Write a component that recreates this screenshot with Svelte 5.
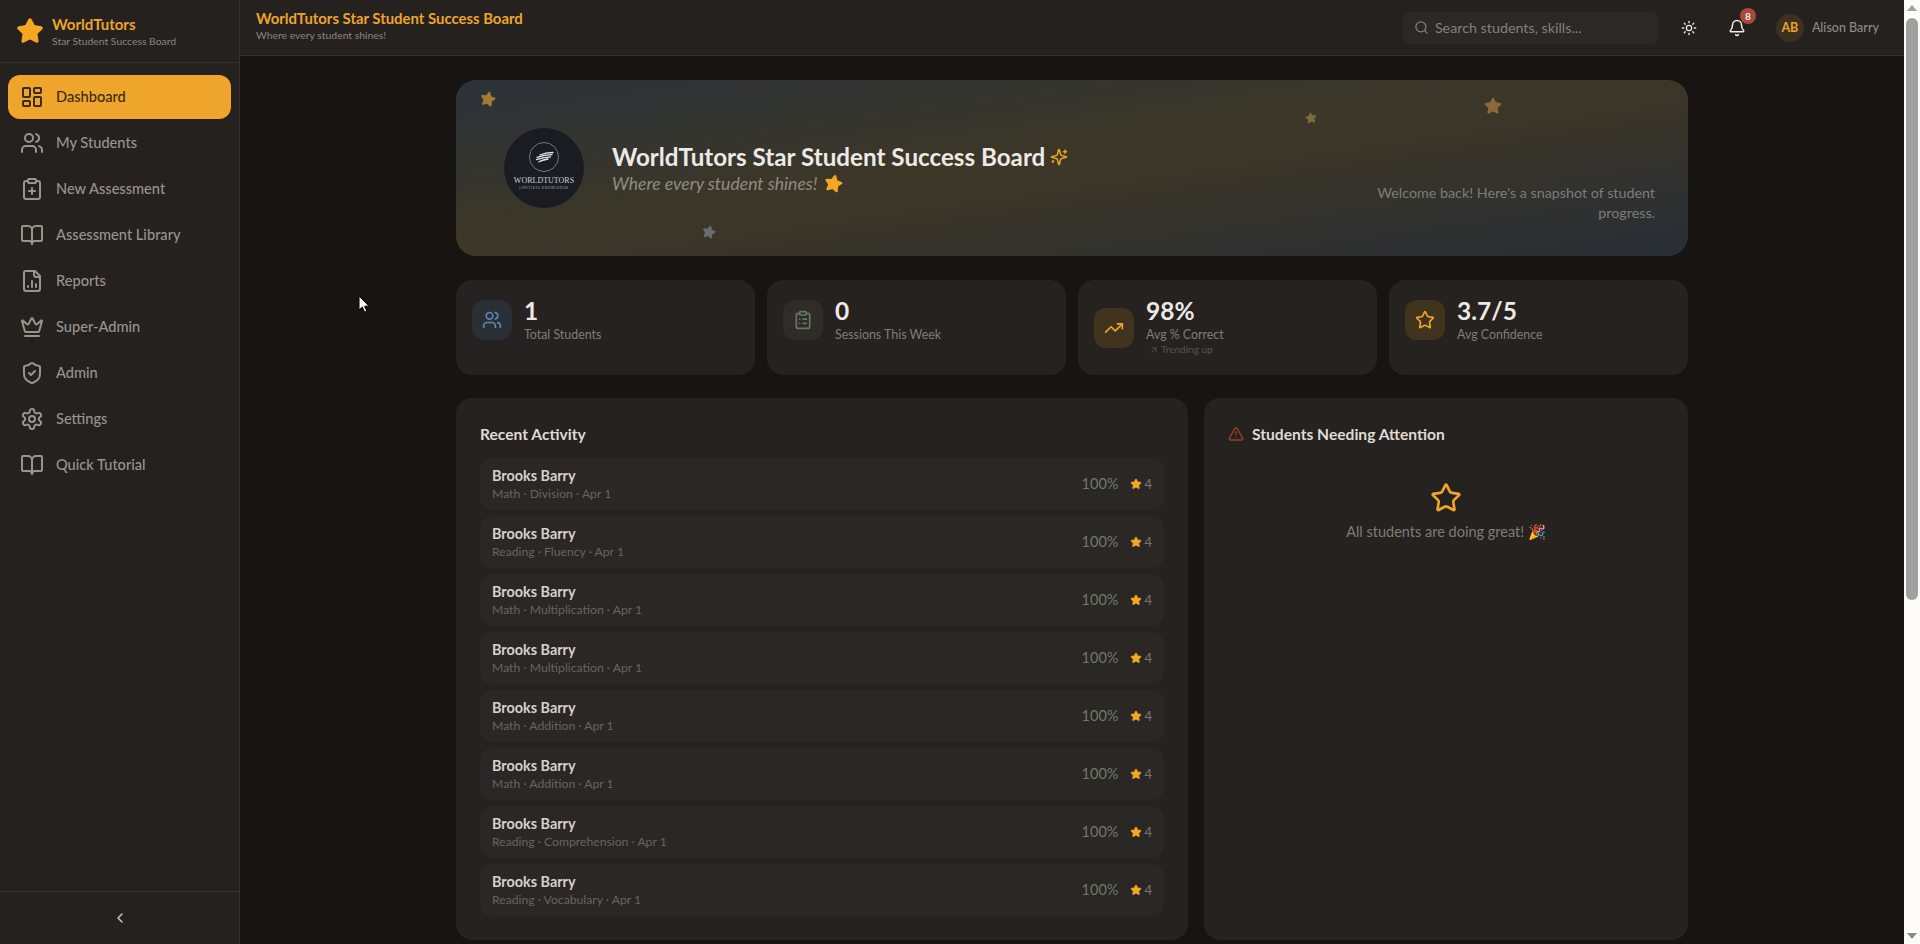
<script>
  const star = 'M11.525 2.295a.53.53 0 0 1 .95 0l2.31 4.679a2.123 2.123 0 0 0 1.595 1.16l5.166.756a.53.53 0 0 1 .294.904l-3.736 3.638a2.123 2.123 0 0 0-.611 1.878l.882 5.14a.53.53 0 0 1-.771.56l-4.618-2.428a2.122 2.122 0 0 0-1.973 0L6.396 21.01a.53.53 0 0 1-.77-.56l.881-5.139a2.122 2.122 0 0 0-.611-1.879L2.16 9.795a.53.53 0 0 1 .294-.906l5.165-.755a2.122 2.122 0 0 0 1.597-1.16z';
  const users = ['M16 21v-2a4 4 0 0 0-4-4H6a4 4 0 0 0-4 4v2', 'M16 3.13a4 4 0 0 1 0 7.75', 'M22 21v-2a4 4 0 0 0-3-3.87', 'M13 7a4 4 0 1 1-8 0a4 4 0 1 1 8 0'];
  const book = ['M12 7v14', 'M3 18a1 1 0 0 1-1-1V4a1 1 0 0 1 1-1h5a4 4 0 0 1 4 4 4 4 0 0 1 4-4h5a1 1 0 0 1 1 1v13a1 1 0 0 1-1 1h-6a3 3 0 0 0-3 3 3 3 0 0 0-3-3z'];
  const clip = 'M16 4h2a2 2 0 0 1 2 2v14a2 2 0 0 1-2 2H6a2 2 0 0 1-2-2V6a2 2 0 0 1 2-2h2';
  const clipTop = 'M9 2h6a1 1 0 0 1 1 1v2a1 1 0 0 1-1 1H9a1 1 0 0 1-1-1V3a1 1 0 0 1 1-1z';

  const nav = [
    { label: 'Dashboard', active: true, paths: ['M4 3h5a1 1 0 0 1 1 1v7a1 1 0 0 1-1 1H4a1 1 0 0 1-1-1V4a1 1 0 0 1 1-1z', 'M15 3h5a1 1 0 0 1 1 1v3a1 1 0 0 1-1 1h-5a1 1 0 0 1-1-1V4a1 1 0 0 1 1-1z', 'M15 12h5a1 1 0 0 1 1 1v7a1 1 0 0 1-1 1h-5a1 1 0 0 1-1-1v-7a1 1 0 0 1 1-1z', 'M4 16h5a1 1 0 0 1 1 1v3a1 1 0 0 1-1 1H4a1 1 0 0 1-1-1v-3a1 1 0 0 1 1-1z'] },
    { label: 'My Students', paths: users },
    { label: 'New Assessment', paths: [clipTop, clip, 'M9 14h6', 'M12 17v-6'] },
    { label: 'Assessment Library', paths: book },
    { label: 'Reports', paths: ['M15 2H6a2 2 0 0 0-2 2v16a2 2 0 0 0 2 2h12a2 2 0 0 0 2-2V7Z', 'M14 2v4a2 2 0 0 0 2 2h4', 'M8 18v-1', 'M12 18v-6', 'M16 18v-3'] },
    { label: 'Super-Admin', paths: ['M11.562 3.266a.5.5 0 0 1 .876 0L15.39 8.87a1 1 0 0 0 1.516.294L21.183 5.5a.5.5 0 0 1 .798.519l-2.834 10.246a1 1 0 0 1-.956.734H5.81a1 1 0 0 1-.957-.734L2.02 6.02a.5.5 0 0 1 .798-.519l4.276 3.664a1 1 0 0 0 1.516-.294z', 'M5 21h14'] },
    { label: 'Admin', paths: ['M20 13c0 5-3.5 7.5-7.66 8.95a1 1 0 0 1-.67-.01C7.5 20.5 4 18 4 13V6a1 1 0 0 1 1-1c2 0 4.5-1.2 6.24-2.72a1.17 1.17 0 0 1 1.52 0C14.51 3.81 17 5 19 5a1 1 0 0 1 1 1z', 'm9 12 2 2 4-4'] },
    { label: 'Settings', paths: ['M12.22 2h-.44a2 2 0 0 0-2 2v.18a2 2 0 0 1-1 1.73l-.43.25a2 2 0 0 1-2 0l-.15-.08a2 2 0 0 0-2.73.73l-.22.38a2 2 0 0 0 .73 2.73l.15.1a2 2 0 0 1 1 1.72v.51a2 2 0 0 1-1 1.74l-.15.09a2 2 0 0 0-.73 2.73l.22.38a2 2 0 0 0 2.73.73l.15-.08a2 2 0 0 1 2 0l.43.25a2 2 0 0 1 1 1.73V20a2 2 0 0 0 2 2h.44a2 2 0 0 0 2-2v-.18a2 2 0 0 1 1-1.73l.43-.25a2 2 0 0 1 2 0l.15.08a2 2 0 0 0 2.73-.73l.22-.39a2 2 0 0 0-.73-2.73l-.15-.08a2 2 0 0 1-1-1.74v-.5a2 2 0 0 1 1-1.74l.15-.09a2 2 0 0 0 .73-2.73l-.22-.38a2 2 0 0 0-2.73-.73l-.15.08a2 2 0 0 1-2 0l-.43-.25a2 2 0 0 1-1-1.73V4a2 2 0 0 0-2-2z', 'M15 12a3 3 0 1 1-6 0a3 3 0 1 1 6 0'] },
    { label: 'Quick Tutorial', paths: book }
  ];

  const stats = [
    { value: '1', label: 'Total Students', tint: 'blue', paths: users },
    { value: '0', label: 'Sessions This Week', tint: 'green', paths: [clipTop, clip, 'M12 11h4', 'M12 16h4', 'M8 11h.01', 'M8 16h.01'] },
    { value: '98%', label: 'Avg % Correct', tint: 'amber', trend: 'Trending up', paths: ['M22 7l-8.5 8.5-5-5L2 17', 'M16 7h6v6'] },
    { value: '3.7/5', label: 'Avg Confidence', tint: 'amber', paths: [star] }
  ];

  const activity = [
    'Math · Division · Apr 1',
    'Reading · Fluency · Apr 1',
    'Math · Multiplication · Apr 1',
    'Math · Multiplication · Apr 1',
    'Math · Addition · Apr 1',
    'Math · Addition · Apr 1',
    'Reading · Comprehension · Apr 1',
    'Reading · Vocabulary · Apr 1'
  ];

  const floaters = [
    { x: 488, y: 99, s: 16, c: '#a07c34', r: 12 },
    { x: 1311, y: 118, s: 12, c: '#7d6a3c', r: -8 },
    { x: 1493, y: 106, s: 18, c: '#8a6a3a', r: 0 },
    { x: 709, y: 232, s: 14, c: '#6a6c70', r: 14 }
  ];
</script>

{#snippet icon(paths, size, cls = '')}
  <svg class={cls} width={size} height={size} viewBox="0 0 24 24" fill="none" stroke="currentColor" stroke-width="2" stroke-linecap="round" stroke-linejoin="round">
    {#each paths as d}<path {d} />{/each}
  </svg>
{/snippet}

{#snippet solidStar(size)}
  <svg width={size} height={size} viewBox="0 0 24 24" fill="#f5a623" stroke="#f5a623" stroke-width="2" stroke-linejoin="round"><path d={star} /></svg>
{/snippet}

<div class="shell">
  <aside class="sidebar">
    <div class="brand">
      {@render solidStar(28)}
      <div>
        <div class="brand-name">WorldTutors</div>
        <div class="brand-sub">Star Student Success Board</div>
      </div>
    </div>
    <nav class="nav">
      {#each nav as item}
        <div class="nav-item" class:active={item.active}>
          {@render icon(item.paths, 24)}
          <span>{item.label}</span>
        </div>
      {/each}
    </nav>
    <div class="collapse">
      {@render icon(['m15 18-6-6 6-6'], 16)}
    </div>
  </aside>

  <div class="main">
    <header class="topbar">
      <div class="top-title">
        <div class="top-name">WorldTutors Star Student Success Board</div>
        <div class="top-sub">Where every student shines!</div>
      </div>
      <div class="search">
        {@render icon(['m21 21-4.34-4.34', 'M19 11a8 8 0 1 1-16 0a8 8 0 1 1 16 0'], 15)}
        <span>Search students, skills...</span>
      </div>
      <div class="sun">
        {@render icon(['M16 12a4 4 0 1 1-8 0a4 4 0 1 1 8 0', 'M12 2v2', 'M12 20v2', 'm4.93 4.93 1.41 1.41', 'm17.66 17.66 1.41 1.41', 'M2 12h2', 'M20 12h2', 'm6.34 17.66-1.41 1.41', 'm19.07 4.93-1.41 1.41'], 16)}
      </div>
      <div class="bell">
        {@render icon(['M10.268 21a2 2 0 0 0 3.464 0', 'M3.262 15.326A1 1 0 0 0 4 17h16a1 1 0 0 0 .74-1.673C19.41 13.956 18 12.499 18 8A6 6 0 0 0 6 8c0 4.499-1.411 5.956-2.738 7.326'], 18)}
        <span class="badge">8</span>
      </div>
      <div class="user">
        <div class="avatar">AB</div>
        <span>Alison Barry</span>
      </div>
    </header>

    <main class="content">
      <section class="hero">
        <div class="logo">
          <div class="logo-ring">
            <svg width="20" height="13" viewBox="0 0 20 13" fill="none" stroke="#e3e8ee" stroke-width="1.3" stroke-linecap="round">
              <path d="M19 1.5C14 1.5 9 2.6 6 4" />
              <path d="M18 3.6C13 3.8 7 5 3 6.4" />
              <path d="M16.5 5.8C12 6.2 6.5 7.2 2.5 8.6" />
              <path d="M14 8C10.500 8.600 7 9.600 5 10.800" />
            </svg>
          </div>
          <div class="logo-word">WORLDTUTORS</div>
          <div class="logo-tag">LIMITLESS KNOWLEDGE</div>
        </div>
        <div class="hero-text">
          <h1>WorldTutors Star Student Success Board {@render icon(['M9.937 15.5A2 2 0 0 0 8.5 14.063l-6.135-1.582a.5.5 0 0 1 0-.962L8.5 9.936A2 2 0 0 0 9.937 8.5l1.582-6.135a.5.5 0 0 1 .963 0L14.063 8.5A2 2 0 0 0 15.5 9.937l6.135 1.581a.5.5 0 0 1 0 .964L15.5 14.063a2 2 0 0 0-1.437 1.437l-1.582 6.135a.5.5 0 0 1-.963 0z', 'M20 3v4', 'M22 5h-4', 'M4 17v2', 'M5 18H3'], 18, 'sparkle')}</h1>
          <p class="tagline">Where every student shines! <span class="tag-star">{@render solidStar(19)}</span></p>
        </div>
        <p class="welcome">Welcome back! Here's a snapshot of student progress.</p>
        {#each floaters as f}
          <svg class="floater" style="left:{f.x - 456 - f.s / 2}px;top:{f.y - 80 - f.s / 2}px;transform:rotate({f.r}deg)" width={f.s} height={f.s} viewBox="0 0 24 24" fill={f.c} stroke={f.c} stroke-width="2" stroke-linejoin="round"><path d={star} /></svg>
        {/each}
      </section>

      <section class="stats">
        {#each stats as s}
          <div class="stat">
            <div class="stat-inner">
              <div class="stat-icon {s.tint}">{@render icon(s.paths, 20)}</div>
              <div>
                <div class="stat-value">{s.value}</div>
                <div class="stat-label">{s.label}</div>
                {#if s.trend}
                  <div class="stat-trend">{@render icon(['M7 7h10v10', 'M7 17 17 7'], 10)} {s.trend}</div>
                {/if}
              </div>
            </div>
          </div>
        {/each}
      </section>

      <section class="panels">
        <div class="panel">
          <h2>Recent Activity</h2>
          <div class="rows">
            {#each activity as sub}
              <div class="row">
                <div class="row-text">
                  <div class="row-name">Brooks Barry</div>
                  <div class="row-sub">{sub}</div>
                </div>
                <span class="pct">100%</span>
                <span class="conf">{@render solidStar(12)}4</span>
              </div>
            {/each}
          </div>
        </div>
        <div class="panel">
          <h2 class="attention">
            {@render icon(['m21.73 18-8-14a2 2 0 0 0-3.48 0l-8 14A2 2 0 0 0 4 21h16a2 2 0 0 0 1.73-3', 'M12 9v4', 'M12 17h.01'], 16)}
            <span>Students Needing Attention</span>
          </h2>
          <div class="empty">
            {@render icon([star], 32)}
            <p>All students are doing great! 🎉</p>
          </div>
        </div>
      </section>
    </main>
  </div>

  <div class="scrollbar">
    <span class="arrow up"></span>
    <div class="track"><div class="thumb"></div></div>
    <span class="arrow down"></span>
  </div>

  <svg class="cursor" width="12" height="19" viewBox="0 0 12 19"><path d="M1 1v14l3.4-3 2.2 5.2 2.2-1-2.2-5h4.4z" fill="#fff" stroke="#000" stroke-width="1" /></svg>
</div>

<style>
  :global(body) {
    margin: 0;
    background: #171412;
    font-family: "Lato", "Noto Sans", sans-serif;
  }

  .shell {
    display: flex;
    position: relative;
    width: 1920px;
    height: 944px;
    overflow: hidden;
    background: #171412;
  }

  .sidebar {
    display: flex;
    flex-direction: column;
    flex: 0 0 240px;
    box-sizing: border-box;
    border-right: 1px solid #36312e;
    background: #25211f;
  }

  .brand {
    display: flex;
    align-items: center;
    gap: 8px;
    box-sizing: border-box;
    height: 63px;
    padding: 0 16px;
    border-bottom: 1px solid #36312e;
  }
  .brand-name {
    color: #eda42b;
    font-size: 15px;
    font-weight: 700;
    line-height: 20px;
  }
  .brand-sub {
    color: #8a8580;
    font-size: 10.4px;
    line-height: 14px;
  }

  .nav {
    display: flex;
    flex: 1;
    flex-direction: column;
    gap: 2px;
    padding: 12px 8px;
  }
  .nav-item {
    display: flex;
    align-items: center;
    gap: 12px;
    height: 44px;
    padding: 0 12px;
    border-radius: 12px;
    color: #9a948d;
    font-size: 14.6px;
    font-weight: 500;
  }
  .nav-item span { padding-bottom: 2px; }
  .nav-item.active {
    background: #efa52c;
    color: #3a2a16;
  }

  .collapse {
    display: flex;
    align-items: center;
    justify-content: center;
    height: 52px;
    border-top: 1px solid #3a3532;
    color: #d5d0cb;
  }

  .main {
    display: flex;
    flex: 1;
    flex-direction: column;
    min-width: 0;
  }

  .topbar {
    display: flex;
    flex: 0 0 56px;
    align-items: center;
    box-sizing: border-box;
    padding: 0 25px 0 16px;
    border-bottom: 1px solid #36312e;
    background: #25211f;
  }
  .top-title {
    flex: 1;
    padding-bottom: 5px;
  }
  .top-name {
    color: #eda42b;
    font-size: 14.9px;
    font-weight: 700;
    line-height: 20px;
  }
  .top-sub {
    color: #8a8580;
    font-size: 10.4px;
    line-height: 14px;
  }

  .search {
    display: flex;
    align-items: center;
    gap: 6px;
    box-sizing: border-box;
    width: 256px;
    height: 32px;
    padding: 0 12px 0 11px;
    border-radius: 8px;
    background: #2c2825;
    color: #85807a;
    font-size: 14.3px;
  }
  .search span { padding-bottom: 1px; }

  .sun {
    display: flex;
    margin-left: 22px;
    color: #e8e4df;
  }

  .bell {
    display: flex;
    position: relative;
    margin-left: 31px;
    color: #f0ece8;
  }
  .badge {
    position: absolute;
    top: -11px;
    right: -10px;
    width: 16px;
    height: 16px;
    border-radius: 50%;
    background: #a8493d;
    color: #f0e6e0;
    font-size: 10px;
    font-weight: 700;
    line-height: 16px;
    text-align: center;
  }

  .user {
    display: flex;
    align-items: center;
    gap: 8px;
    margin-left: 30px;
    color: #8f8a84;
    font-size: 12.5px;
    font-weight: 500;
  }
  .avatar {
    width: 28px;
    height: 28px;
    border-radius: 50%;
    background: #3d3020;
    color: #eda42b;
    font-size: 12.5px;
    font-weight: 700;
    line-height: 28px;
    text-align: center;
  }

  .content {
    flex: 1;
    box-sizing: border-box;
    width: 1280px;
    margin: 0 auto;
    padding: 24px;
    overflow: hidden;
  }

  .hero {
    display: flex;
    align-items: center;
    position: relative;
    box-sizing: border-box;
    height: 176px;
    padding: 0 33px 0 48px;
    border-radius: 20px;
    background: linear-gradient(to bottom right, #2b323a 0%, #3c3727 45%, #3a3529 58%, #272e36 100%);
  }

  .logo {
    display: flex;
    flex: 0 0 80px;
    flex-direction: column;
    align-items: center;
    box-sizing: border-box;
    height: 80px;
    padding-top: 14px;
    border-radius: 50%;
    background: #1a1c22;
  }
  .logo-ring {
    display: flex;
    align-items: center;
    justify-content: center;
    box-sizing: border-box;
    width: 30px;
    height: 30px;
    border: 1px solid #5a7f9c;
    border-radius: 50%;
  }
  .logo-word {
    margin-top: 4px;
    color: #c4cfdb;
    font-family: "Liberation Serif", serif;
    font-size: 8px;
    line-height: 10px;
  }
  .logo-tag {
    color: #8fa0b2;
    font-size: 3.5px;
    line-height: 5px;
    letter-spacing: .5px;
  }

  .hero-text {
    flex: 1;
    margin-left: 28px;
  }
  h1 {
    display: flex;
    align-items: center;
    gap: 5px;
    margin: 0;
    color: #ece9e6;
    font-size: 24.2px;
    font-weight: 700;
    line-height: 32px;
  }
  h1 :global(.sparkle) { color: #eda42b; }
  .tagline {
    display: flex;
    align-items: center;
    gap: 7px;
    margin: -1px 0 0;
    color: #8f8c86;
    font-size: 17.6px;
    font-style: italic;
    line-height: 24px;
  }
  .tag-star {
    display: flex;
    transform: rotate(12deg);
  }
  .welcome {
    align-self: flex-end;
    box-sizing: border-box;
    width: 288px;
    margin: 0 0 33px;
    color: #807c76;
    font-size: 14.3px;
    line-height: 20px;
    text-align: right;
  }
  .floater { position: absolute; }

  .stats {
    display: grid;
    grid-template-columns: repeat(4, 1fr);
    gap: 12px;
    margin-top: 24px;
  }
  .stat {
    box-sizing: border-box;
    height: 95px;
    padding: 20px 16px;
    border-radius: 16px;
    background: #26221f;
  }
  .stat-inner {
    display: flex;
    align-items: center;
    gap: 12px;
  }
  .stat-icon {
    display: flex;
    flex: 0 0 40px;
    align-items: center;
    justify-content: center;
    height: 40px;
    border-radius: 12px;
  }
  .stat-icon.blue { background: #2a2f35; color: #5b87b5; }
  .stat-icon.green { background: #2f2c29; color: #66795f; }
  .stat-icon.amber { background: #41341f; color: #eda42b; }
  .stat-value {
    color: #ece9e6;
    font-size: 24.5px;
    font-weight: 700;
    line-height: 22px;
  }
  .stat-label {
    margin: 5px 0 -3px;
    color: #827d78;
    font-size: 12.4px;
    line-height: 16px;
  }
  .stat-trend {
    display: flex;
    align-items: center;
    gap: 2px;
    margin-top: 3px;
    padding-left: 3px;
    color: #59554f;
    font-size: 10px;
    line-height: 13px;
  }

  .panels {
    display: grid;
    grid-template-columns: 732px 1fr;
    gap: 16px;
    margin-top: 23px;
  }
  .panel {
    box-sizing: border-box;
    height: 542px;
    padding: 24px;
    border-radius: 16px;
    background: #26221f;
  }
  h2 {
    margin: 0 0 12px;
    color: #dfdbd6;
    font-size: 15.6px;
    font-weight: 700;
    line-height: 24px;
  }
  .attention {
    display: flex;
    align-items: center;
    gap: 8px;
  }
  .attention :global(svg) { color: #9c3f2c; }

  .rows {
    display: flex;
    flex-direction: column;
    gap: 6px;
  }
  .row {
    display: flex;
    align-items: center;
    box-sizing: border-box;
    height: 52px;
    padding: 0 12px;
    border-radius: 12px;
    background: #2b2724;
  }
  .row-text { flex: 1; }
  .row-name {
    color: #d6d2cd;
    font-size: 14.4px;
    font-weight: 700;
    line-height: 20px;
  }
  .row-sub {
    color: #69645f;
    font-size: 12.2px;
    line-height: 16px;
  }
  .pct {
    margin-right: 12px;
    padding-bottom: 2px;
    color: #6e7a6a;
    font-size: 14.5px;
  }
  .conf {
    display: flex;
    align-items: center;
    gap: 2px;
    color: #7a7670;
    font-size: 13px;
  }

  .empty {
    display: flex;
    flex-direction: column;
    align-items: center;
    padding-top: 24px;
    color: #f0a52b;
  }
  .empty p {
    margin: 8px 0 0;
    color: #807c76;
    font-size: 14.5px;
    line-height: 20px;
  }

  .scrollbar {
    display: flex;
    flex: 0 0 16px;
    flex-direction: column;
    align-items: center;
    background: #fcfbfa;
  }
  .track {
    flex: 1;
    width: 100%;
    padding-top: 2px;
    box-sizing: border-box;
  }
  .thumb {
    width: 12px;
    height: 582px;
    margin: 0 auto;
    border-radius: 6px;
    background: #a0a0a0;
  }
  .arrow {
    flex: 0 0 auto;
    width: 0;
    height: 0;
    margin: 5px 0;
    border-left: 5px solid transparent;
    border-right: 5px solid transparent;
  }
  .arrow.up { border-bottom: 6px solid #a0a0a0; }
  .arrow.down { border-top: 6px solid #8a8a8a; }

  .cursor {
    position: absolute;
    left: 358px;
    top: 295px;
  }
</style>
